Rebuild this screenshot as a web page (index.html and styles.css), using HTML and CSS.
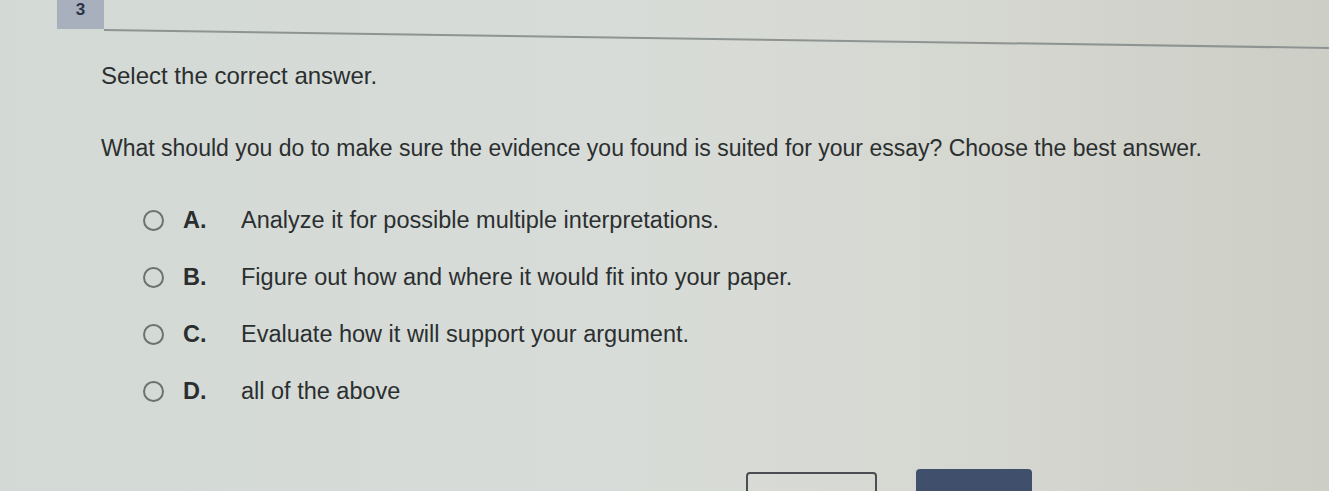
FILE: index.html
```html
<!DOCTYPE html>
<html lang="en">
<head>
<meta charset="utf-8">
<title>Question 3</title>
<link rel="stylesheet" href="styles.css">
</head>
<body>
<div class="screen">
  <header class="q-header">
    <div class="q-number">3</div>
    <div class="q-rule"></div>
  </header>

  <main class="q-body">
    <p class="q-instruction">Select the correct answer.</p>
    <p class="q-prompt">What should you do to make sure the evidence you found is suited for your essay? Choose the best answer.</p>

    <ul class="q-options">
      <li class="q-option"><span class="radio"></span><span class="letter">A.</span><span class="text">Analyze it for possible multiple interpretations.</span></li>
      <li class="q-option"><span class="radio"></span><span class="letter">B.</span><span class="text">Figure out how and where it would fit into your paper.</span></li>
      <li class="q-option"><span class="radio"></span><span class="letter">C.</span><span class="text">Evaluate how it will support your argument.</span></li>
      <li class="q-option"><span class="radio"></span><span class="letter">D.</span><span class="text">all of the above</span></li>
    </ul>

    <div class="q-actions">
      <button class="btn btn-outline" type="button"></button>
      <button class="btn btn-primary" type="button"></button>
    </div>
  </main>
</div>
</body>
</html>
```

FILE: styles.css
```css
html, body {
  margin: 0;
  padding: 0;
}

body {
  width: 1329px;
  height: 491px;
  overflow: hidden;
  font-family: "Liberation Sans", Arial, sans-serif;
  color: #2b2f30;
  background: linear-gradient(90deg, #d3d9d5 0%, #d8dcd8 45%, #d6d8d2 70%, #cdcfc6 100%);
}

.screen {
  height: 491px;
  display: flex;
  flex-direction: column;
}

/* question number tab and the rule beside it */
.q-header {
  height: 30px;
  display: flex;
  align-items: flex-start;
}

.q-number {
  margin-left: 57px;
  width: 47px;
  height: 29px;
  background: #a8b0bd;
  color: #2b3247;
  font-weight: bold;
  font-size: 17px;
  line-height: 19px;
  text-align: center;
}

.q-rule {
  flex: 1;
  height: 2px;
  margin-top: 29px;
  background: #8e9492;
  transform-origin: left center;
  transform: rotate(0.84deg);
}

.q-body {
  padding-left: 101px;
}

.q-instruction,
.q-prompt {
  margin: 0;
  line-height: 28px;
}

.q-instruction {
  margin-top: 32px;
  font-size: 24px;
}

.q-prompt {
  margin-top: 44px;
  font-size: 23px;
}

.q-options {
  list-style: none;
  margin: 44px 0 0;
  padding: 0 0 0 42px;
  display: flex;
  flex-direction: column;
  gap: 29px;
}

.q-option {
  display: flex;
  align-items: center;
  height: 28px;
  font-size: 23.5px;
  line-height: 28px;
}

.radio {
  box-sizing: border-box;
  width: 21px;
  height: 21px;
  border: 2px solid #6d7170;
  border-radius: 50%;
  margin-right: 19px;
}

.letter {
  width: 58px;
  font-weight: bold;
  color: #2a2e2f;
}

.q-actions {
  margin-top: 64px;
  margin-left: 645px;
  display: flex;
  align-items: flex-start;
  gap: 39px;
}

.btn {
  padding: 0;
  font: inherit;
}

.btn-outline {
  margin-top: 3px;
  width: 131px;
  height: 40px;
  border: 2px solid #4a4e52;
  border-radius: 4px;
  background: transparent;
}

.btn-primary {
  width: 116px;
  height: 40px;
  border: none;
  border-radius: 4px;
  background: #3f4f6c;
}
```
